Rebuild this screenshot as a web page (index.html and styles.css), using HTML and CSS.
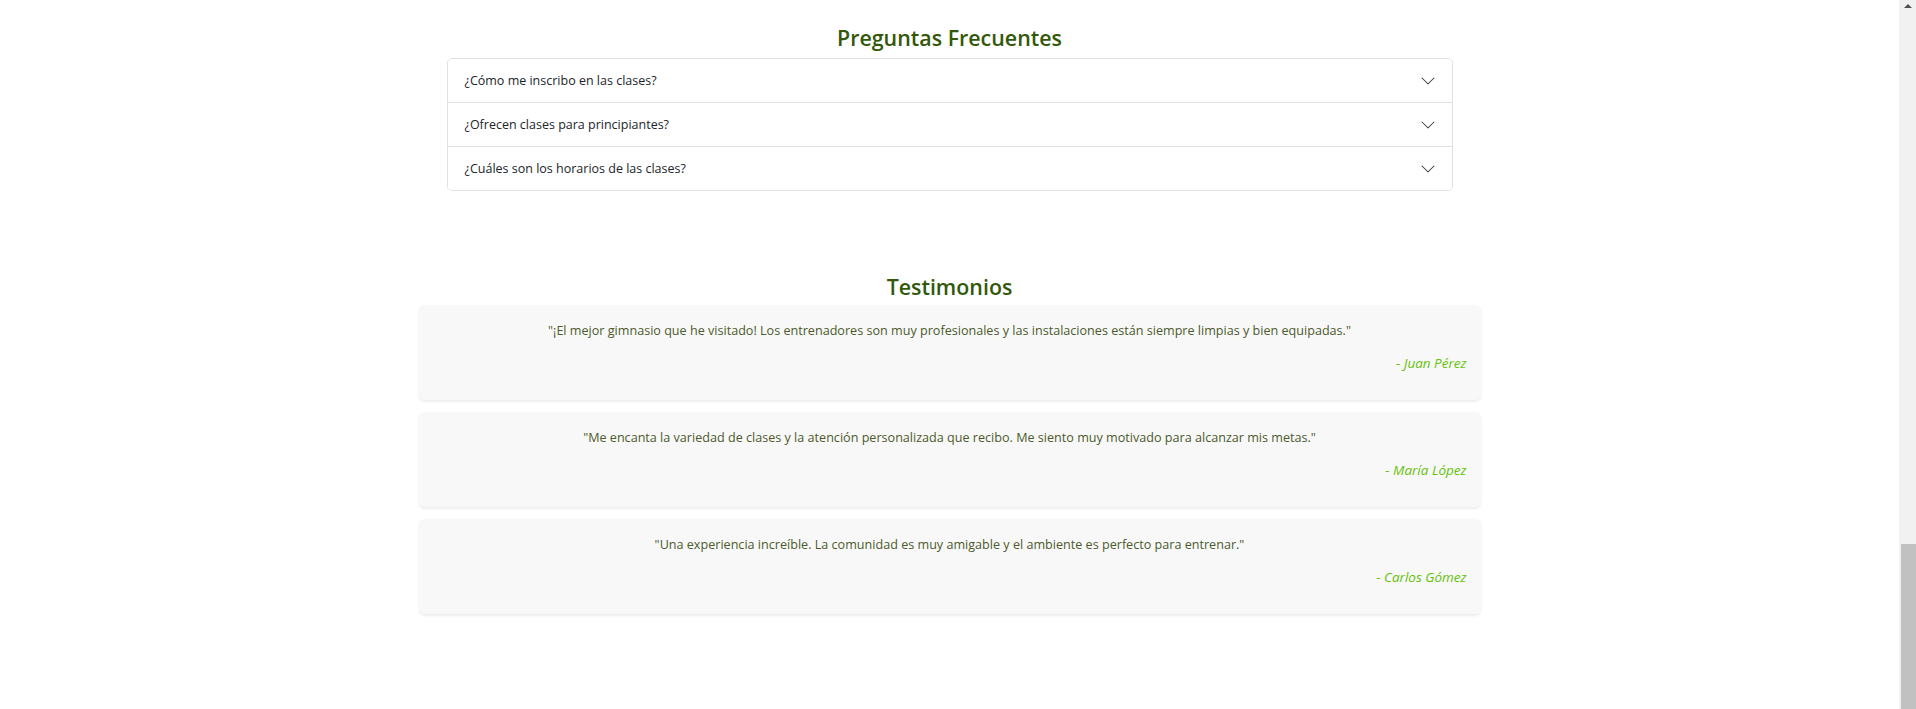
FILE: index.html
```html
<!DOCTYPE html>
<html lang="es">
<head>
<meta charset="utf-8">
<title>Preguntas Frecuentes y Testimonios</title>
<link rel="stylesheet" href="styles.css">
</head>
<body>
<div class="viewport">
  <main class="page">
    <section class="faq">
      <h2 class="section-title title-faq">Preguntas Frecuentes</h2>
      <div class="accordion">
        <div class="acc-item">
          <button class="acc-btn" type="button"><span>¿Cómo me inscribo en las clases?</span>
            <svg class="chev" viewBox="0 0 16 16" width="16" height="16"><path d="M1.646 4.646a.5.5 0 0 1 .708 0L8 10.293l5.646-5.647a.5.5 0 0 1 .708.708l-6 6a.5.5 0 0 1-.708 0l-6-6a.5.5 0 0 1 0-.708z"/></svg>
          </button>
        </div>
        <div class="acc-item">
          <button class="acc-btn" type="button"><span>¿Ofrecen clases para principiantes?</span>
            <svg class="chev" viewBox="0 0 16 16" width="16" height="16"><path d="M1.646 4.646a.5.5 0 0 1 .708 0L8 10.293l5.646-5.647a.5.5 0 0 1 .708.708l-6 6a.5.5 0 0 1-.708 0l-6-6a.5.5 0 0 1 0-.708z"/></svg>
          </button>
        </div>
        <div class="acc-item">
          <button class="acc-btn" type="button"><span>¿Cuáles son los horarios de las clases?</span>
            <svg class="chev" viewBox="0 0 16 16" width="16" height="16"><path d="M1.646 4.646a.5.5 0 0 1 .708 0L8 10.293l5.646-5.647a.5.5 0 0 1 .708.708l-6 6a.5.5 0 0 1-.708 0l-6-6a.5.5 0 0 1 0-.708z"/></svg>
          </button>
        </div>
      </div>
    </section>

    <section class="testimonials">
      <h2 class="section-title title-test">Testimonios</h2>
      <div class="cards">
        <blockquote class="card">
          <p class="quote">"¡El mejor gimnasio que he visitado! Los entrenadores son muy profesionales y las instalaciones están siempre limpias y bien equipadas."</p>
          <p class="author">- Juan Pérez</p>
        </blockquote>
        <blockquote class="card">
          <p class="quote">"Me encanta la variedad de clases y la atención personalizada que recibo. Me siento muy motivado para alcanzar mis metas."</p>
          <p class="author">- María López</p>
        </blockquote>
        <blockquote class="card">
          <p class="quote">"Una experiencia increíble. La comunidad es muy amigable y el ambiente es perfecto para entrenar."</p>
          <p class="author">- Carlos Gómez</p>
        </blockquote>
      </div>
    </section>
  </main>

  <div class="scrollbar" aria-hidden="true">
    <div class="sb-btn"><span class="sb-arrow"></span></div>
    <div class="sb-track"><div class="sb-thumb"></div></div>
  </div>
</div>
</body>
</html>
```

FILE: styles.css
```css
* { box-sizing: border-box; }

html, body {
  margin: 0;
  padding: 0;
  background: #ffffff;
}

body {
  font-family: "Open Sans", "Noto Sans", "Liberation Sans", sans-serif;
  color: #212529;
}

.viewport {
  display: flex;
  height: 709px;
  overflow: hidden;
}

.page {
  flex: 1;
  display: flex;
  flex-direction: column;
  align-items: center;
  padding-top: 24px;
}

.section-title {
  margin: 0;
  font-size: 21.4px;
  line-height: 27px;
  font-weight: 600;
  color: #33580a;
  text-align: center;
}

.title-faq { margin-bottom: 7px; }
.title-test { margin-bottom: 5px; }

.faq {
  width: 1006px;
}

.accordion {
  border: 1px solid #dee2e6;
  border-radius: 5px;
  overflow: hidden;
}

.acc-item + .acc-item {
  border-top: 1px solid #dee2e6;
}

.acc-btn {
  display: flex;
  align-items: center;
  justify-content: space-between;
  width: 100%;
  height: 43px;
  padding: 0 16px 0 17px;
  border: 0;
  background: #ffffff;
  font-family: inherit;
  font-size: 12.5px;
  color: #212529;
  text-align: left;
  cursor: pointer;
}

.chev {
  flex: none;
  fill: #3a3f44;
}

.testimonials {
  margin-top: 82px;
  width: 1062px;
}

.cards {
  display: flex;
  flex-direction: column;
  gap: 12px;
}

.card {
  margin: 0;
  height: 95px;
  padding: 16px 14px 27px;
  background: #f8f8f8;
  border-radius: 6px;
  box-shadow: 0 1.5px 3px rgba(0, 0, 0, 0.075);
}

.quote {
  margin: 0 0 12px;
  font-size: 12.6px;
  line-height: 20px;
  color: #4c5a2c;
  text-align: center;
}

.author {
  margin: 0;
  font-size: 13.5px;
  line-height: 20px;
  font-style: italic;
  color: #66c20a;
  text-align: right;
}

.scrollbar {
  flex: none;
  width: 17px;
  display: flex;
  flex-direction: column;
  background: #f1f1f1;
}

.sb-btn {
  height: 17px;
  display: flex;
  justify-content: center;
  align-items: center;
}

.sb-arrow {
  width: 0;
  height: 0;
  border-left: 4px solid transparent;
  border-right: 4px solid transparent;
  border-bottom: 4px solid #505050;
  margin-bottom: 6px;
}

.sb-track {
  flex: 1;
  display: flex;
  flex-direction: column;
  justify-content: flex-end;
}

.sb-thumb {
  height: 165px;
  margin-left: 2px;
  background: #c1c1c1;
}
```
